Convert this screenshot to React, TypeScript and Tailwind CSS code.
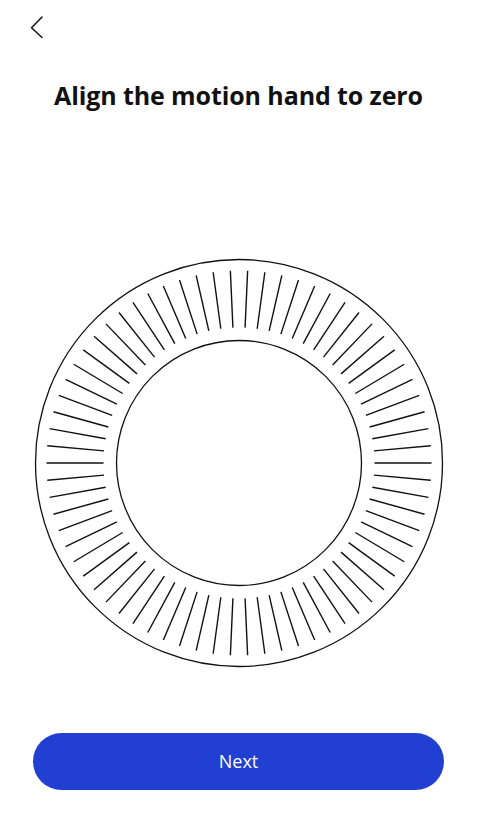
import React from "react";

const TICKS = 70;
const CX = 210;
const CY = 210;

function Dial() {
  const ticks = Array.from({ length: TICKS }, (_, i) => {
    const a = (i * 2 * Math.PI) / TICKS;
    const c = Math.cos(a);
    const s = Math.sin(a);
    return (
      <line
        key={i}
        x1={CX + c * 135.5}
        y1={CY + s * 135.5}
        x2={CX + c * 192.5}
        y2={CY + s * 192.5}
        stroke="#111"
        strokeWidth={1.4}
      />
    );
  });
  return (
    <svg width="420" height="420" viewBox="0 0 420 420" className="block">
      <circle cx={CX} cy={CY} r={203.5} fill="none" stroke="#111" strokeWidth={1.3} />
      <circle cx={CX} cy={CY} r={122.5} fill="none" stroke="#111" strokeWidth={1.3} />
      {ticks}
    </svg>
  );
}

export default function App() {
  return (
    <div
      className="w-[477px] h-[827px] bg-white flex flex-col items-center overflow-hidden"
      style={{ fontFamily: '"Open Sans", "Noto Sans", sans-serif' }}
    >
      <div className="w-full h-[56px] flex items-start">
        <button className="ml-[24px] mt-[12px] w-[24px] h-[32px]" aria-label="Back">
          <svg width="24" height="32" viewBox="0 0 24 32" fill="none">
            <path d="M18 5 L7.5 15.7 L18 25.5" stroke="#111" strokeWidth="1.5" strokeLinecap="round" strokeLinejoin="round" />
          </svg>
        </button>
      </div>
      <h1 className="mt-[23px] h-[32px] leading-[32px] text-[25px] font-bold text-[#111] tracking-[-0.1px] text-center whitespace-nowrap">
        Align the motion hand to zero
      </h1>
      <div className="mt-[141.5px]">
        <Dial />
      </div>
      <button className="mt-[60.5px] w-[411px] h-[57px] rounded-full bg-[#2140d1] text-white text-[18px] leading-[57px] text-center">
        Next
      </button>
    </div>
  );
}
